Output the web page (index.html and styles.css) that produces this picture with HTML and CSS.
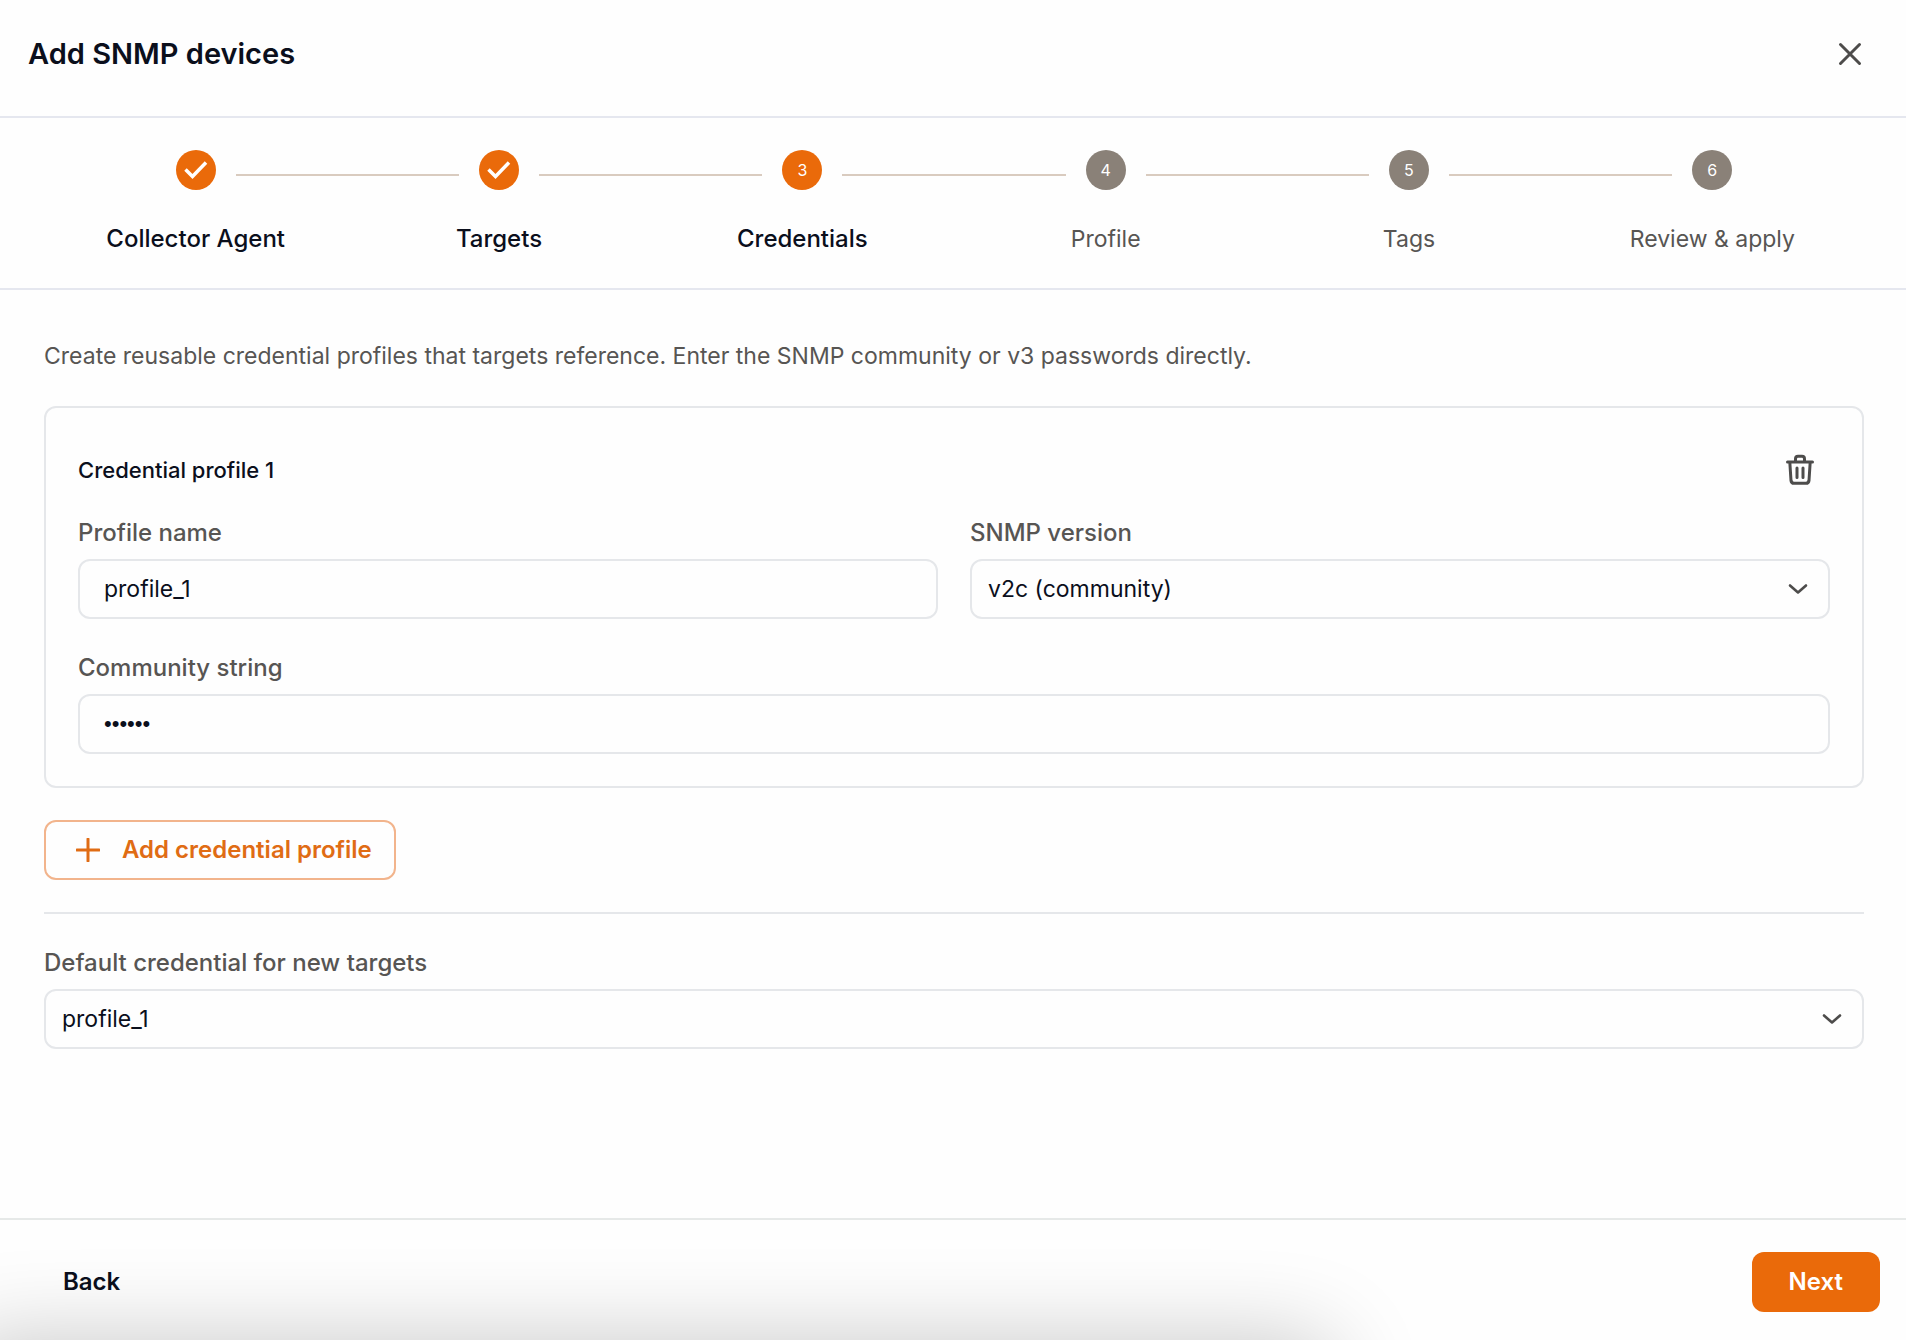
FILE: index.html
```html
<!doctype html>
<html lang="en">
  <head>
    <meta charset="UTF-8" />
    <meta name="viewport" content="width=device-width, initial-scale=1.0" />
    <title>Add SNMP devices</title>
    <link rel="stylesheet" href="styles.css">
  </head>
  <body>
    <div class="wizard">
      <header class="wizard-header">
        <h1 class="wizard-title">Add SNMP devices</h1>
        <button class="icon-button" type="button" aria-label="Close">
          <svg width="24" height="24" viewBox="0 0 24 24">
            <path d="M2.5 2.5 L21.5 21.5 M21.5 2.5 L2.5 21.5" />
          </svg>
        </button>
      </header>

      <ol class="stepper">
        <li class="step done">
          <span class="step-marker">
            <svg width="24" height="20" viewBox="0 0 24 20">
              <path d="M1.5 9.5 L8.5 16.5 L22 2.5" />
            </svg>
          </span>
          <span class="step-label">Collector Agent</span>
        </li>
        <li class="step done">
          <span class="step-marker">
            <svg width="24" height="20" viewBox="0 0 24 20">
              <path d="M1.5 9.5 L8.5 16.5 L22 2.5" />
            </svg>
          </span>
          <span class="step-label">Targets</span>
        </li>
        <li class="step active" aria-current="step">
          <span class="step-marker">3</span>
          <span class="step-label">Credentials</span>
        </li>
        <li class="step">
          <span class="step-marker">4</span>
          <span class="step-label">Profile</span>
        </li>
        <li class="step">
          <span class="step-marker">5</span>
          <span class="step-label">Tags</span>
        </li>
        <li class="step">
          <span class="step-marker">6</span>
          <span class="step-label">Review &amp; apply</span>
        </li>
      </ol>

      <main class="wizard-body">
        <p class="intro">Create reusable credential profiles that targets reference. Enter the SNMP community or v3 passwords directly.</p>

        <section class="card">
          <div class="card-header">
            <h2 class="card-title">Credential profile 1</h2>
            <button class="icon-button" type="button" aria-label="Delete profile">
              <svg width="30" height="32" viewBox="0 0 30 32">
                <path d="M2.5 8 H27.5 M4.8 8 L6 26.5 Q6.3 29.3 9 29.3 H21 Q23.7 29.3 24 26.5 L25.2 8 M10.5 8 V5 Q10.5 2.3 13 2.3 H17 Q19.5 2.3 19.5 5 V8 M12 14 V23.5 M18 14 V23.5" />
              </svg>
            </button>
          </div>

          <div class="field-row">
            <div class="field">
              <label for="profile-name">Profile name</label>
              <input class="control" id="profile-name" type="text" value="profile_1" />
            </div>
            <div class="field">
              <label for="snmp-version">SNMP version</label>
              <div class="select">
                <select class="control" id="snmp-version">
                  <option>v2c (community)</option>
                </select>
                <svg class="chevron" width="20" height="12" viewBox="0 0 20 12">
                  <path d="M2 2.5 L10 9.5 L18 2.5" />
                </svg>
              </div>
            </div>
          </div>

          <div class="field">
            <label for="community">Community string</label>
            <input class="control secret" id="community" type="password" value="public" />
          </div>
        </section>

        <button class="button outline" type="button">
          <svg width="24" height="24" viewBox="0 0 24 24">
            <path d="M12 1 V23 M1 12 H23" />
          </svg>
          Add credential profile
        </button>

        <hr class="divider" />

        <div class="field">
          <label for="default-credential">Default credential for new targets</label>
          <div class="select">
            <select class="control" id="default-credential">
              <option>profile_1</option>
            </select>
            <svg class="chevron" width="20" height="12" viewBox="0 0 20 12">
              <path d="M2 2.5 L10 9.5 L18 2.5" />
            </svg>
          </div>
        </div>
      </main>

      <footer class="wizard-footer">
        <button class="button text" type="button">Back</button>
        <button class="button primary" type="button">Next</button>
      </footer>

      <div class="bottom-shade"></div>
    </div>
  </body>
</html>
```

FILE: styles.css
```css
* {
  box-sizing: border-box;
}

body {
  margin: 0;
  background: #fefefe;
  color: #0b0f1c;
  font-family: Inter, "Liberation Sans", sans-serif;
  font-size: 23px;
  line-height: 34px;
}

svg {
  display: block;
  flex: none;
  fill: none;
  stroke: currentColor;
  stroke-width: 3;
  stroke-linecap: round;
  stroke-linejoin: round;
}

button,
input,
select {
  font: inherit;
  color: inherit;
}

.wizard {
  position: relative;
  display: flex;
  flex-direction: column;
  min-height: 100vh;
  overflow: hidden;
}

.wizard-header {
  display: flex;
  align-items: center;
  justify-content: space-between;
  padding: 24px 26px 32px 28px;
  border-bottom: 2px solid #e5e7ef;
}

.wizard-title {
  margin: 0;
  font-size: 29px;
  font-weight: 600;
}

.icon-button {
  display: flex;
  align-items: center;
  justify-content: center;
  width: 60px;
  height: 60px;
  padding: 0;
  border: 0;
  background: none;
  color: #4d4c4b;
  cursor: pointer;
}

/* stepper */
.stepper {
  display: grid;
  grid-template-columns: repeat(6, 1fr);
  margin: 0;
  padding: 32px 42px 32px 44px;
  border-bottom: 2px solid #e5e7ef;
  list-style: none;
}

.step {
  position: relative;
  display: flex;
  flex-direction: column;
  align-items: center;
  gap: 32px;
  color: #575553;
}

/* connector to the next step */
.step:not(:last-child)::after {
  content: "";
  position: absolute;
  top: 24px;
  left: calc(50% + 40px);
  width: calc(100% - 80px);
  height: 2px;
  background: #d9cbbf;
}

.step-marker {
  display: flex;
  align-items: center;
  justify-content: center;
  width: 40px;
  height: 40px;
  border-radius: 50%;
  background: #8a8178;
  color: #fff;
  font-size: 16px;
}

.step-marker svg {
  stroke-linecap: butt;
  stroke-linejoin: miter;
  stroke-width: 3.5;
}

.step.done .step-marker,
.step.active .step-marker {
  background: #ea6a0a;
}

.step.done,
.step.active {
  color: #0b0f1c;
  font-size: 24px;
  font-weight: 500;
}

.step.active .step-marker {
  font-weight: 400;
}

/* body */
.wizard-body {
  flex: 1;
  display: flex;
  flex-direction: column;
  gap: 32px;
  padding: 48px 42px 32px 44px;
}

.intro {
  margin: 0;
  color: #575553;
  line-height: 36px;
}

.card {
  display: flex;
  flex-direction: column;
  gap: 32px;
  padding: 32px;
  border: 2px solid #e5e7ea;
  border-radius: 12px;
}

.card-header {
  display: flex;
  align-items: center;
  justify-content: space-between;
  margin-bottom: -16px;
}

.card-title {
  margin: 0;
  font-size: 22px;
  font-weight: 500;
}

.field-row {
  display: grid;
  grid-template-columns: 1fr 1fr;
  gap: 32px;
}

.field {
  display: flex;
  flex-direction: column;
  gap: 9px;
}

.field label {
  color: #575553;
  font-size: 24px;
  font-weight: 500;
}

.control {
  width: 100%;
  height: 60px;
  padding: 0 24px;
  border: 2px solid #e5e7ea;
  border-radius: 12px;
  background: #fefefe;
}

.control.secret {
  font-family: "Liberation Sans", sans-serif;
  font-size: 22px;
}

.select {
  position: relative;
}

.select .control {
  padding: 0 56px 0 16px;
  appearance: none;
}

.chevron {
  position: absolute;
  top: 24px;
  right: 22px;
  color: #4d4c4b;
  stroke-width: 2.6;
  pointer-events: none;
}

.button {
  display: flex;
  align-items: center;
  height: 60px;
  border: 0;
  border-radius: 12px;
  background: none;
  font-size: 24px;
  font-weight: 600;
  cursor: pointer;
}

.button.outline {
  align-self: flex-start;
  gap: 22px;
  padding: 0 22px 0 30px;
  border: 2px solid #f2b48c;
  color: #e06c14;
}

.button.text {
  padding: 0 19px;
}

.button.primary {
  padding: 0 37px;
  background: #ea6a0a;
  color: #fff;
}

.divider {
  width: 100%;
  margin: 0;
  border: 0;
  border-top: 2px solid #e5e7ea;
}

.wizard-footer {
  display: flex;
  justify-content: space-between;
  padding: 32px 26px 28px 44px;
  border-top: 2px solid #e6e9e8;
}

/* soft shade rising from under the bottom edge */
.bottom-shade {
  position: absolute;
  top: 100%;
  left: -40px;
  width: 72%;
  height: 200px;
  border-radius: 24px;
  box-shadow: 0 0 90px rgba(0, 0, 0, 0.22);
  pointer-events: none;
}
```
